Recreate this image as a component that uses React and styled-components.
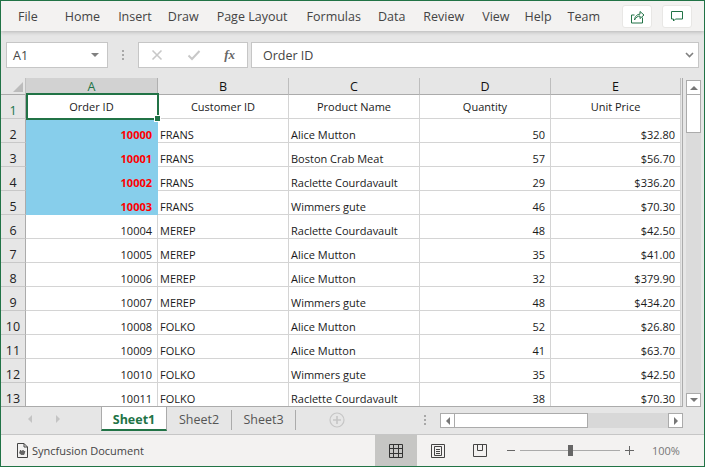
import React from 'react';
import styled, { createGlobalStyle } from 'styled-components';

const Global = createGlobalStyle`
  html, body { margin: 0; padding: 0; background: #fff; }
  #root { width: 705px; height: 467px; }
  * { box-sizing: border-box; }
`;
const FONT = `"Open Sans", "Noto Sans", sans-serif`;

const Frame = styled.div`
  width: 705px; height: 467px; border: 1px solid #217346;
  display: flex; flex-direction: column; background: #e6e6e6; overflow: hidden;
  font-family: ${FONT}; color: #222;
`;
const Ribbon = styled.div`
  height: 30px; flex: none; background: #f3f2f1; display: flex; align-items: center;
  box-shadow: 0 1px 4px rgba(0,0,0,.22); position: relative; z-index: 2; padding-left: 17px;
`;
const Tab = styled.span`
  font-size: 12.5px; color: #444; margin-right: ${p => p.$gap}px;
`;
const RibbonActions = styled.div`
  margin-left: auto; margin-right: 12px; display: flex; gap: 10px;
`;
const ActionBtn = styled.div`
  width: 30px; height: 23px; background: #fff; border: 1px solid #e8e7e5; border-radius: 3px;
  display: flex; align-items: center; justify-content: center;
`;
const FormulaBar = styled.div`
  height: 47px; flex: none; display: flex; align-items: center; padding: 0 5px 0 5px;
`;
const NameBox = styled.div`
  width: 102px; height: 26px; flex: none; background: #fff; border: 1px solid #c6c6c6; display: flex;
  align-items: center; justify-content: space-between; padding: 1px 8px 0 6px; font-size: 12.5px; color: #444;
`;
const Caret = styled.span`
  width: 0; height: 0; border-left: 4px solid transparent; border-right: 4px solid transparent;
  border-top: 4px solid #808080;
`;
const Grip = styled.div`
  width: ${p => p.$w}px; flex: none; display: flex; flex-direction: column; align-items: center; gap: 2px;
  i { width: 2px; height: 2px; background: #a8a8a8; display: block; }
`;
const FxBox = styled.div`
  width: 110px; height: 26px; flex: none; background: #fff; border: 1px solid #c6c6c6; display: flex;
  align-items: center; padding: 0 12px; justify-content: space-between;
`;
const FxText = styled.span`
  font-family: "Liberation Serif", serif; font-style: italic; font-size: 13px; color: #666; font-weight: 700;
`;
const FormulaInput = styled.div`
  flex: 1; height: 26px; margin-left: 3px; background: #fff; border: 1px solid #c6c6c6; display: flex;
  align-items: center; justify-content: space-between; padding: 1px 4px 0 11px; font-size: 12.5px; color: #444;
`;
const SheetArea = styled.div`
  height: 329px; flex: none; display: flex;
`;
const Grid = styled.div`
  width: 682px; flex: none; display: flex; flex-direction: column; overflow: hidden;
  border-right: 1px solid #ababab; border-bottom: 1px solid #ababab;
`;
const Row = styled.div`
  display: flex; flex: none; height: ${p => p.$h}px;
`;
const Corner = styled.div`
  width: 25px; flex: none; background: #e6e6e6; border-right: 1px solid #c0c0c0; border-bottom: 1px solid #ababab;
  display: flex; align-items: flex-end; justify-content: flex-end; padding: 0 2px 2px 0;
`;
const ColHead = styled.div`
  width: ${p => p.$w}px; flex: none; background: ${p => p.$active ? '#d2d2d2' : '#e6e6e6'};
  border-right: 1px solid ${p => p.$active ? '#b0b0b0' : '#bdbdbd'}; border-bottom: 1px solid #ababab;
  color: ${p => p.$active ? '#217346' : '#111'};
  font-size: 12.5px; display: flex; align-items: flex-end; justify-content: center; line-height: 15px;
`;
const RowHead = styled.div`
  width: 25px; flex: none; background: #e6e6e6; border-right: 1px solid #ababab; border-bottom: 1px solid #c8c8c8;
  color: ${p => p.$active ? '#217346' : '#222'}; font-size: 12.5px;
  display: flex; align-items: flex-end; justify-content: center; line-height: 15px;
`;
const Cell = styled.div`
  width: ${p => p.$w}px; flex: none; background: ${p => p.$fill ? '#87ceeb' : '#fff'};
  border-right: 1px solid ${p => p.$fill ? '#87ceeb' : '#d4d4d4'};
  border-bottom: 1px solid ${p => p.$fill ? '#87ceeb' : '#d4d4d4'};
  color: ${p => p.$fill ? '#ff0000' : '#1a1a1a'}; font-weight: ${p => p.$fill ? 700 : 400};
  font-size: 11px; display: flex; align-items: flex-end; line-height: 14px; padding: 0 ${p => p.$align === 'right' ? 5 : 2}px 0 2px;
  justify-content: ${p => p.$align === 'right' ? 'flex-end' : p.$align === 'center' ? 'center' : 'flex-start'};
  white-space: nowrap; overflow: hidden;
`;
const HeaderCell = styled(Cell)`
  align-items: center;
`;
const SelectedWrap = styled.div`
  position: relative; width: ${p => p.$w}px; flex: none; display: flex;
`;
const SelectBorder = styled.div`
  position: absolute; left: 0; top: -2px; right: -1px; bottom: -1px; border: 2px solid #217346; pointer-events: none; z-index: 2;
`;
const Handle = styled.div`
  position: absolute; right: -2px; bottom: -2px; width: 5px; height: 5px; background: #217346; z-index: 3; outline: 1px solid #fff;
`;
const VScroll = styled.div`
  width: 15px; margin: 2px 0 0 3px; height: 327px; flex: none; display: flex; flex-direction: column; background: #dbdbdb;
`;
const ScrollBtn = styled.div`
  width: 15px; height: ${p => p.$h}px; flex: none; background: #fff; border: 1px solid #ababab; display: flex; align-items: center; justify-content: center;
`;
const VThumb = styled.div`
  width: 15px; height: 38px; flex: none; background: #fff; border: 1px solid #ababab; border-top: 0;
`;
const Spacer = styled.div`flex: 1;`;
const Up = styled.span`
  width: 0; height: 0; border-left: 4px solid transparent; border-right: 4px solid transparent;
  border-${p => p.$dir === 'up' ? 'bottom' : 'top'}: 4px solid #777;
`;
const TabBar = styled.div`
  height: 28px; flex: none; display: flex; align-items: flex-start; background: #e6e6e6; border-bottom: 1px solid #c6c6c6;
`;
const TabNav = styled.div`
  width: 100px; flex: none; height: 24px; display: flex; align-items: center; justify-content: center; gap: 24px; padding-right: 14px;
`;
const Tri = styled.span`
  width: 0; height: 0; border-top: 4px solid transparent; border-bottom: 4px solid transparent;
  border-${p => p.$dir === 'l' ? 'right' : 'left'}: 4px solid #c4c4c4;
`;
const ActiveSheet = styled.div`
  width: 66px; height: 24px; background: #fff; border-left: 1px solid #ababab; border-right: 1px solid #ababab;
  border-bottom: 2px solid #217346; color: #217346; font-weight: 700; font-size: 12.5px; padding-top: 2px;
  display: flex; align-items: center; justify-content: center; flex: none;
`;
const SheetTab = styled.div`
  width: ${p => p.$w}px; height: 20px; margin-top: 3px; padding-bottom: 1px; flex: none; border-right: 1px solid #ababab; color: #555; font-size: 12.5px;
  display: flex; align-items: center; justify-content: center;
`;
const AddWrap = styled.div`
  width: 144px; flex: none; height: 20px; margin-top: 3px; padding: 0 8px 0 33px; display: flex; align-items: center; justify-content: space-between;
`;
const HBar = styled.div`
  width: 243px; height: 15px; margin-top: 6px; flex: none; display: flex; background: #d8d8d8;
`;
const HBtn = styled.div`
  width: 15px; height: 15px; flex: none; background: #fff; border: 1px solid #ababab; display: flex; align-items: center; justify-content: center;
`;
const HThumb = styled.div`
  width: 133px; flex: none; background: #fff; border: 1px solid #ababab; border-left: 0;
`;
const HTri = styled(Tri)`
  border-${p => p.$dir === 'l' ? 'right' : 'left'}-color: #777;
`;
const Status = styled.div`
  flex: 1; min-height: 0; background: #f3f2f1; display: flex; align-items: stretch; font-size: 11px; color: #444;
`;
const StatusLeft = styled.div`
  width: 374px; flex: none; display: flex; align-items: center; padding-left: 16px; gap: 4px;
`;
const ViewBtn = styled.div`
  width: 42px; flex: none; display: flex; align-items: center; justify-content: center;
  background: ${p => p.$active ? '#c6c6c4' : 'transparent'};
`;
const Zoom = styled.div`
  display: flex; align-items: center; flex: 1; padding-left: 6px; font-size: 11px; color: #666;
`;
const Sign = styled.span`
  width: 8px; height: 1px; background: #666; flex: none;
`;
const Track = styled.div`
  width: 100px; height: 1px; background: #aaa; margin: 0 5px; position: relative; flex: none;
`;
const Knob = styled.div`
  position: absolute; left: 48px; top: -5px; width: 5px; height: 11px; background: #666;
`;
const Pct = styled.span`
  margin-left: 18px; color: #777;
`;

const W = [132, 131, 131, 131, 130];
const heads = ['Order ID', 'Customer ID', 'Product Name', 'Quantity', 'Unit Price'];
const data = [
  [10000, 'FRANS', 'Alice Mutton', 50, '$32.80'],
  [10001, 'FRANS', 'Boston Crab Meat', 57, '$56.70'],
  [10002, 'FRANS', 'Raclette Courdavault', 29, '$336.20'],
  [10003, 'FRANS', 'Wimmers gute', 46, '$70.30'],
  [10004, 'MEREP', 'Raclette Courdavault', 48, '$42.50'],
  [10005, 'MEREP', 'Alice Mutton', 35, '$41.00'],
  [10006, 'MEREP', 'Alice Mutton', 32, '$379.90'],
  [10007, 'MEREP', 'Wimmers gute', 48, '$434.20'],
  [10008, 'FOLKO', 'Alice Mutton', 52, '$26.80'],
  [10009, 'FOLKO', 'Alice Mutton', 41, '$63.70'],
  [10010, 'FOLKO', 'Wimmers gute', 35, '$42.50'],
  [10011, 'FOLKO', 'Raclette Courdavault', 38, '$70.30'],
];
const tabs = [['File', 27], ['Home', 18], ['Insert', 16], ['Draw', 18], ['Page Layout', 19], ['Formulas', 17], ['Data', 18], ['Review', 18], ['View', 15], ['Help', 16], ['Team', 0]];

export default function App() {
  return (
    <Frame>
      <Global />
      <Ribbon>
        {tabs.map(([t, g]) => <Tab key={t} $gap={g}>{t}</Tab>)}
        <RibbonActions>
          <ActionBtn>
            <svg width="15" height="15" viewBox="0 0 15 15" fill="none" stroke="#217346">
              <path d="M12.5 8.5v5.5h-11v-8h3" />
              <path d="M4.5 11c.3-4 3-5.8 5.5-5.8V2.5l4 3.5-4 3.5V7c-2.5 0-4 1.5-5.5 4z" />
            </svg>
          </ActionBtn>
          <ActionBtn>
            <svg width="14" height="14" viewBox="0 0 14 14" fill="none" stroke="#217346">
              <path d="M1.5 2.5h11v7.5h-7l-2 2v-2h-2z" />
            </svg>
          </ActionBtn>
        </RibbonActions>
      </Ribbon>
      <FormulaBar>
        <NameBox>A1<Caret /></NameBox>
        <Grip $w={30}><i /><i /><i /></Grip>
        <FxBox>
          <svg width="12" height="12" viewBox="0 0 12 12" fill="none" stroke="#c8c8c8" strokeWidth="1.6"><path d="M1.5 1.5l9 9M10.5 1.5l-9 9" /></svg>
          <svg width="14" height="12" viewBox="0 0 14 12" fill="none" stroke="#c8c8c8" strokeWidth="2"><path d="M1.5 6.5l3.5 3.5 7.5-8" /></svg>
          <FxText>fx</FxText>
        </FxBox>
        <FormulaInput>
          Order ID
          <svg width="9" height="6" viewBox="0 0 9 6" fill="none" stroke="#808080" strokeWidth="1.6"><path d="M1 1l3.5 3.5L8 1" /></svg>
        </FormulaInput>
      </FormulaBar>
      <SheetArea>
        <Grid>
          <Row $h={17}>
            <Corner>
              <svg width="10" height="10" viewBox="0 0 10 10"><path d="M10 0v10H0z" fill="#bcbcbc" /></svg>
            </Corner>
            {['A', 'B', 'C', 'D', 'E'].map((c, i) => <ColHead key={c} $w={W[i]} $active={i === 0}>{c}</ColHead>)}
          </Row>
          <Row $h={24}>
            <RowHead $active>1</RowHead>
            {heads.map((h, i) => i === 0 ? (
              <SelectedWrap key={h} $w={W[i]}>
                <HeaderCell $w={W[i]} $align="center">{h}</HeaderCell>
                <SelectBorder /><Handle />
              </SelectedWrap>
            ) : (
              <HeaderCell key={h} $w={W[i]} $align="center">{h}</HeaderCell>
            ))}
          </Row>
          {data.map((r, ri) => (
            <Row key={r[0]} $h={24}>
              <RowHead>{ri + 2}</RowHead>
              {r.map((v, i) => (
                <Cell key={i} $w={W[i]} $align={i === 0 || i > 2 ? 'right' : 'left'} $fill={i === 0 && ri < 4}>{v}</Cell>
              ))}
            </Row>
          ))}
        </Grid>
        <VScroll>
          <ScrollBtn $h={15}><Up $dir="up" /></ScrollBtn>
          <VThumb />
          <Spacer />
          <ScrollBtn $h={14}><Up $dir="down" /></ScrollBtn>
        </VScroll>
      </SheetArea>
      <TabBar>
        <TabNav><Tri $dir="l" /><Tri $dir="r" /></TabNav>
        <ActiveSheet>Sheet1</ActiveSheet>
        <SheetTab $w={65}>Sheet2</SheetTab>
        <SheetTab $w={64}>Sheet3</SheetTab>
        <AddWrap>
          <svg width="16" height="16" viewBox="0 0 16 16" fill="none" stroke="#c6c6c6" strokeWidth="1.2"><circle cx="8" cy="8" r="7" /><path d="M8 4v8M4 8h8" strokeWidth="1.6" /></svg>
          <Grip $w={15}><i /><i /><i /></Grip>
        </AddWrap>
        <HBar>
          <HBtn><HTri $dir="l" /></HBtn>
          <HThumb />
          <Spacer />
          <HBtn><HTri $dir="r" /></HBtn>
        </HBar>
      </TabBar>
      <Status>
        <StatusLeft>
          <svg width="11" height="15" viewBox="0 0 11 15" fill="none" stroke="#444"><path d="M.5.5h6.5l3.5 3.5v10.5h-10z" /><path d="M7 .5V4h3.5" /><path d="M2.5 10l1-3 1.5 2 1-2 1 2 1-1-1 3.5h-3z" fill="#666" strokeWidth=".6" /></svg>
          Syncfusion Document
        </StatusLeft>
        <ViewBtn $active>
          <svg width="14" height="14" viewBox="0 0 14 14" fill="none" stroke="#333"><path d="M.5.5h13v13H.5zM4.5.5v13M9.5.5v13M.5 4.5h13M.5 9.5h13" /></svg>
        </ViewBtn>
        <ViewBtn>
          <svg width="14" height="14" viewBox="0 0 14 14" fill="none" stroke="#444"><path d="M.5.5h13v13H.5z" /><path d="M3.5 2.5h7v9h-7zM5 5.5h4M5 7.5h4M5 9.5h4" /></svg>
        </ViewBtn>
        <ViewBtn>
          <svg width="14" height="13" viewBox="0 0 14 13" fill="none" stroke="#444"><path d="M.5.5h13v12H.5zM4.5.5v6h5v-6" /></svg>
        </ViewBtn>
        <Zoom>
          <Sign />
          <Track><Knob /></Track>
          <svg width="9" height="9" viewBox="0 0 9 9" stroke="#666"><path d="M4.5 0v9M0 4.5h9" /></svg>
          <Pct>100%</Pct>
        </Zoom>
      </Status>
    </Frame>
  );
}
